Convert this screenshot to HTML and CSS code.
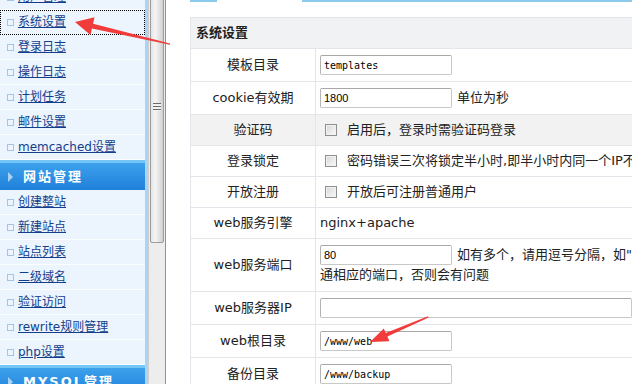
FILE: index.html
```html
<!DOCTYPE html>
<html lang="zh-CN">
<head>
  <meta charset="UTF-8" />
  <title>系统设置</title>
  <link rel="stylesheet" href="styles.css">
</head>
<body>
  <div class="frame">
    <div class="side">
      <ul class="menu">
        <li><a href="#">用户管理</a></li>
        <li class="focus"><a href="#">系统设置</a></li>
        <li><a href="#">登录日志</a></li>
        <li><a href="#">操作日志</a></li>
        <li><a href="#">计划任务</a></li>
        <li><a href="#">邮件设置</a></li>
        <li><a href="#">memcached设置</a></li>
        <li class="head">网站管理</li>
        <li><a href="#">创建整站</a></li>
        <li><a href="#">新建站点</a></li>
        <li><a href="#">站点列表</a></li>
        <li><a href="#">二级域名</a></li>
        <li><a href="#">验证访问</a></li>
        <li><a href="#">rewrite规则管理</a></li>
        <li><a href="#">php设置</a></li>
        <li class="head">MYSQL管理</li>
      </ul>
    </div>
    <div class="scroll">
      <div class="thumb"><span class="grip"></span></div>
    </div>
    <div class="main">
      <div class="tabs"><span></span><span class="on"></span><span class="rest"></span></div>
      <table class="form">
        <colgroup><col class="c-label"><col></colgroup>
        <tr><th colspan="2">系统设置</th></tr>
        <tr class="field">
          <td class="label">模板目录</td>
          <td><input class="text" type="text" value="templates"></td>
        </tr>
        <tr class="field">
          <td class="label">cookie有效期</td>
          <td><input class="text num" type="text" value="1800">单位为秒</td>
        </tr>
        <tr class="hl">
          <td class="label">验证码</td>
          <td><input class="check" type="checkbox">启用后，登录时需验证码登录</td>
        </tr>
        <tr>
          <td class="label">登录锁定</td>
          <td class="nowrap"><input class="check" type="checkbox">密码错误三次将锁定半小时,即半小时内同一个IP不能再登录</td>
        </tr>
        <tr>
          <td class="label">开放注册</td>
          <td><input class="check" type="checkbox">开放后可注册普通用户</td>
        </tr>
        <tr>
          <td class="label">web服务引擎</td>
          <td>nginx+apache</td>
        </tr>
        <tr class="field">
          <td class="label">web服务端口</td>
          <td><input class="text num" type="text" value="80">如有多个，请用逗号分隔，如"80,8080"，并在防火墙开通相应的端口，否则会有问题</td>
        </tr>
        <tr class="field">
          <td class="label">web服务器IP</td>
          <td><input class="text wide" type="text" value=""></td>
        </tr>
        <tr class="field">
          <td class="label">web根目录</td>
          <td><input class="text" type="text" value="/www/web"></td>
        </tr>
        <tr class="field">
          <td class="label">备份目录</td>
          <td><input class="text" type="text" value="/www/backup"></td>
        </tr>
      </table>
    </div>
  </div>

  <svg class="marks" width="632" height="384" viewBox="0 0 632 384">
    <polygon points="75,22 94.5,17.3 93.1,23.7 170,43.4 170,44.8 91.9,28.5 90.5,34.9" />
    <polygon points="370,342 383.8,328.4 385.8,333 428,316.3 428.6,317.6 387.4,336.6 389.4,341.2" />
  </svg>
</body>
</html>
```

FILE: styles.css
```css
* {
  box-sizing: border-box;
}
html, body {
  margin: 0;
}
body {
  width: 632px;
  height: 384px;
  overflow: hidden;
  position: relative;
  background: #fff;
  color: #222;
  font-family: "DejaVu Sans", "Noto Sans CJK SC", sans-serif;
  font-size: 13px;
}
.frame {
  display: flex;
  height: 384px;
}

/* left menu */
.side {
  width: 148px;
  flex: none;
  background: #ecf4fd;
  border-right: 3px solid #a8d5f7;
  overflow: hidden;
}
.menu {
  list-style: none;
  margin: -17px 0 0;
  padding: 0;
}
.menu li {
  display: flex;
  align-items: center;
  height: 25px;
  padding-left: 7px;
  border-bottom: 1px solid #fbfdff;
  font-size: 12px;
  line-height: 24px;
}
.menu li:first-child {
  height: 27px;
  padding-top: 2px;
}
.menu li::before {
  content: "";
  width: 5px;
  height: 5px;
  margin-right: 4px;
  border: 1px solid #a3c6e8;
}
.menu a {
  color: #123e8c;
  text-decoration: underline;
}
.menu li.focus {
  outline: 1px dotted #000;
  outline-offset: -1px;
}
.menu li.head {
  height: 30px;
  padding-top: 3px;
  padding-left: 8px;
  border-bottom: 0;
  background: linear-gradient(#74c6f6 0, #74c6f6 3px, #3da1ec 3px, #1f80da 100%);
  color: #fff;
  font-size: 13px;
  font-weight: bold;
  letter-spacing: 2px;
}
.menu li.head::before {
  width: 0;
  height: 0;
  margin-right: 10px;
  border: 0;
  border-left: 5px solid #a9d2f2;
  border-top: 5px solid transparent;
  border-bottom: 5px solid transparent;
}

/* scroll bar */
.scroll {
  width: 17px;
  flex: none;
  padding: 0 1px;
  background: #ededed;
  border-left: 1px solid #cdcdcd;
}
.thumb {
  height: 246px;
  margin-top: -3px;
  border: 1px solid #9c9c9c;
  border-radius: 2px;
  background: linear-gradient(90deg, #e4e4e4, #f5f5f5 35%, #d0d0d0);
}
.grip {
  display: block;
  width: 8px;
  height: 8px;
  margin: 105px auto 0;
  background: repeating-linear-gradient(#6a6a6a 0 1px, #f2f2f2 1px 3px);
}

/* content */
.main {
  flex: 1;
  min-width: 0;
  overflow: hidden;
  padding-left: 24px;
  border-left: 1px solid #4fa6de;
}
.tabs {
  display: flex;
  height: 2px;
  margin-bottom: 15px;
}
.tabs span {
  width: 27px;
  background: #8ccbeb;
}
.tabs .on {
  width: 85px;
  background: none;
}
.tabs .rest {
  flex: 1;
}
.form {
  width: 603px;
  table-layout: fixed;
  border-collapse: collapse;
}
.c-label {
  width: 125px;
}
.form th, .form td {
  border: 1px solid #e2e5ea;
  padding: 5px 4px;
  line-height: 20px;
  text-align: left;
}
.form th {
  padding-left: 5px;
  background: #f1f2f4;
  font-weight: bold;
}
.form td.label {
  padding-left: 0;
  padding-right: 0;
  text-align: center;
}
.form tr.field td {
  padding-top: 6px;
  padding-bottom: 6px;
}
.form tr.hl td {
  background: #f2f2f2;
}
.nowrap {
  white-space: nowrap;
}
.text {
  width: 132px;
  height: 20px;
  margin: 0 5px 0 0;
  padding: 0 3px;
  vertical-align: top;
  border: 1px solid #c8c8c8;
  border-top-color: #a8a8a8;
  border-left-color: #b4b4b4;
  border-radius: 2px;
  background: #fff;
  color: #000;
  font: 10px "DejaVu Sans Mono", monospace;
}
.text.num {
  font: 11px "Liberation Sans", sans-serif;
}
.text.wide {
  width: 312px;
}
.check {
  appearance: none;
  width: 12px;
  height: 12px;
  margin: 4px 10px 0 5px;
  vertical-align: top;
  border: 1px solid #8e8f8f;
  background: linear-gradient(135deg, #d6d6d6, #fbfbfb);
  box-shadow: inset 0 0 0 1px #f2f2f2;
}

/* red annotation arrows */
.marks {
  position: absolute;
  top: 0;
  left: 0;
  pointer-events: none;
}
.marks polygon {
  fill: #f23b3b;
}
```
